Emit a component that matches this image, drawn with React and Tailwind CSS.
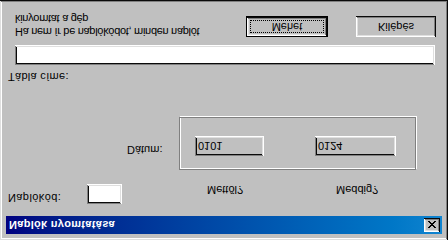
import React from 'react';

// Win98-style "Naplók nyomtatása" dialog. The reference is mirrored top-to-bottom,
// so the dialog is laid out upright and flipped as a whole.

const raised =
  'bg-[#c0c0c0] shadow-[inset_-1px_-1px_#0a0a0a,inset_1px_1px_#ffffff,inset_-2px_-2px_#808080,inset_2px_2px_#dfdfdf]';
const sunken =
  'shadow-[inset_-1px_-1px_#ffffff,inset_1px_1px_#808080,inset_-2px_-2px_#dfdfdf,inset_2px_2px_#0a0a0a]';

function TitleBar() {
  return (
    <div className="h-[18px] flex items-center justify-between bg-linear-to-r from-[#000080] to-[#1084d0]">
      <span className="pl-[3px] text-white font-bold text-[11px] leading-[13px] tracking-[0.3px]">Naplók nyomtatása</span>
      <button className={`w-[16px] h-[14px] mr-[2px] flex items-center justify-center ${raised}`}>
        <svg width="8" height="7" viewBox="0 0 8 7" shapeRendering="crispEdges">
          <path
            d="M0 0h2v1h1v1h2v-1h1v-1h2v1h-1v1h-1v1h-1v1h1v1h1v1h1v1h-2v-1h-1v-1h-2v1h-1v1h-2v-1h1v-1h1v-1h1v-1h-1v-1h-1z"
            fill="#000"
          />
        </svg>
      </button>
    </div>
  );
}

export default function App() {
  return (
    <div
      className="w-[448px] h-[240px] overflow-hidden -scale-y-100 bg-[#c0c0c0] p-[6px] text-black text-[11px] leading-[13px] font-['Liberation_Sans',Arial,sans-serif] shadow-[inset_-1px_-1px_#0a0a0a,inset_1px_1px_#dfdfdf,inset_-2px_-2px_#808080,inset_2px_2px_#ffffff]"
    >
      <TitleBar />

      {/* Naplókód + column headers */}
      <div className="mt-[12px] h-[24px] flex items-start">
        <span className="w-[81px] pl-[2px] tracking-[0.4px]">Naplókód:</span>
        <div className={`w-[35px] h-[20px] bg-white ${sunken}`} />
        <span className="ml-[85px] mt-[8px] w-[129px]">Mettől?</span>
        <span className="mt-[8px]">Meddig?</span>
      </div>

      {/* Dátum range */}
      <div className="mt-[10px] flex items-start">
        <span className="ml-[121px] mt-[14px] w-[52px]">Dátum:</span>
        <div className="w-[237px] h-[53px] border border-[#808080] shadow-[inset_1px_1px_#ffffff,1px_1px_#ffffff] flex items-start pl-[15px] pt-[13px]">
          <div className={`w-[69px] h-[20px] pl-[3px] pt-[4px] ${sunken}`}>0101</div>
          <div className={`ml-[51px] w-[81px] h-[20px] pl-[3px] pt-[4px] ${sunken}`}>0124</div>
        </div>
      </div>

      {/* Tábla címe */}
      <div className="mt-[34px] pl-[2px] tracking-[0.3px]">Tábla címe:</div>
      <div className={`mt-[5px] ml-[9px] w-[420px] h-[20px] bg-white ${sunken}`} />

      {/* hint + buttons */}
      <div className="flex items-start">
        <p className="ml-[9px] mt-[7px] w-[231px] tracking-[-0.3px]">
          Ha nem ír be naplókódot, minden naplót
          <br />
          kinyomtat a gép
        </p>
        <button className="mt-[8px] w-[82px] h-[21px] border border-black">
          <div className={`h-full p-[3px] ${raised}`}>
            <span className="flex h-full items-center justify-center border border-dotted border-black">
              Mehet
            </span>
          </div>
        </button>
        <button className={`ml-[28px] mt-[8px] w-[80px] h-[21px] flex items-center justify-center ${raised}`}>
          Kilépés
        </button>
      </div>
    </div>
  );
}
